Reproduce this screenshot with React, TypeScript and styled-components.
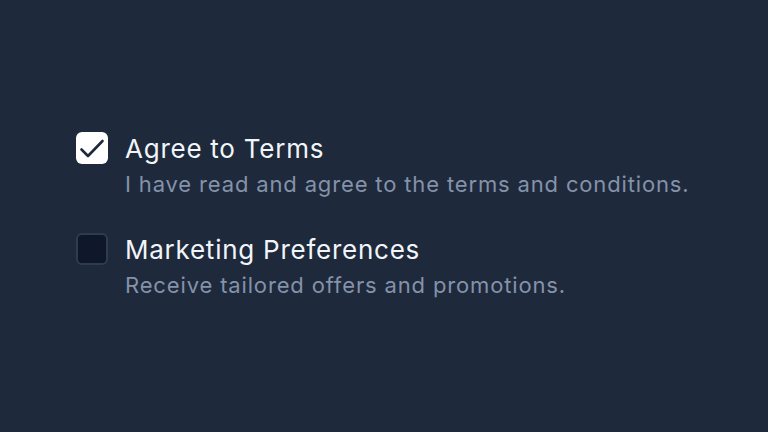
import React from "react";
import styled, { createGlobalStyle } from "styled-components";

const Global = createGlobalStyle`
  html, body { margin: 0; padding: 0; background: #1e293b; }
  body { font-family: Inter, "Noto Sans", sans-serif; }
`;

const Page = styled.div`
  width: 768px;
  height: 432px;
  background: #1e293b;
  display: flex;
  flex-direction: column;
  justify-content: center;
  padding-left: 76px;
  box-sizing: border-box;
  gap: 34px;
`;

const Row = styled.label`
  display: flex;
  align-items: flex-start;
  gap: 17px;
`;

const Box = styled.span<{ $checked?: boolean }>`
  flex: none;
  width: 32px;
  height: 32px;
  box-sizing: border-box;
  border-radius: 6px;
  display: flex;
  align-items: center;
  justify-content: center;
  background: ${(p) => (p.$checked ? "#ffffff" : "#0f172a")};
  border: ${(p) => (p.$checked ? "none" : "2px solid #2f3b50")};
`;

const Text = styled.div`
  display: flex;
  flex-direction: column;
`;

const Title = styled.div`
  color: #f1f5f9;
  font-size: 26px;
  line-height: 32px;
  letter-spacing: 0.75px;
  margin-top: 1px;
`;

const Desc = styled.div`
  color: #8492aa;
  font-size: 22px;
  line-height: 30px;
  margin-top: 4px;
  letter-spacing: 0.85px;
`;

const Check = () => (
  <svg width="32" height="32" viewBox="0 0 32 32" fill="none" stroke="#1e293b" strokeWidth="2.6" strokeLinecap="round" strokeLinejoin="round">
    <path d="M5.5 17.5l6.5 6.5L26.5 9" />
  </svg>
);

export default function App() {
  return (
    <>
      <Global />
      <Page>
        <Row>
          <Box $checked>
            <Check />
          </Box>
          <Text>
            <Title>Agree to Terms</Title>
            <Desc>I have read and agree to the terms and conditions.</Desc>
          </Text>
        </Row>
        <Row>
          <Box />
          <Text>
            <Title>Marketing Preferences</Title>
            <Desc>Receive tailored offers and promotions.</Desc>
          </Text>
        </Row>
      </Page>
    </>
  );
}
